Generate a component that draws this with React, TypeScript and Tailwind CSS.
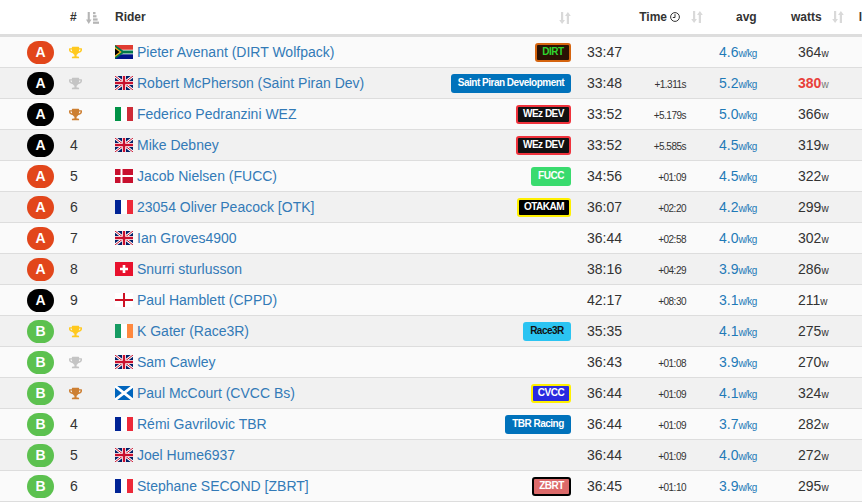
import React from 'react'
import { FaTrophy } from 'react-icons/fa'

type Flag = 'za' | 'gb' | 'it' | 'dk' | 'fr' | 'ch' | 'en' | 'ie' | 'sc'

interface Team {
    name: string
    cls: string
}

interface Rider {
    cat: 'A' | 'B'
    black?: boolean
    pos: number
    flag: Flag
    name: string
    team?: Team
    time: string
    gap?: string
    avg: string
    watts: number
    hot?: boolean
}

const badge = 'block h-[19px] rounded-[3px] text-[10px] tracking-[-0.5px] font-bold text-center whitespace-nowrap'

const TEAMS: Record<string, Team> = {
    dirt: { name: 'DIRT', cls: 'w-[36px] bg-[#2a1204] text-[#2fd62f] border-2 border-[#d5640f] leading-[13px]' },
    spd: { name: 'Saint Piran Development', cls: 'w-[120px] bg-[#0072bb] text-white leading-[17px]' },
    wez: { name: 'WEz DEV', cls: 'w-[55px] bg-[#111111] text-white border-2 border-[#f0323c] leading-[13px]' },
    fucc: { name: 'FUCC', cls: 'w-[40px] bg-[#39db6e] text-white leading-[17px]' },
    otk: { name: 'OTAKAM', cls: 'w-[54px] bg-black text-white border-2 border-[#fff000] leading-[13px]' },
    race3r: { name: 'Race3R', cls: 'w-[48px] bg-[#2bc4f2] text-[#111111] leading-[17px]' },
    cvcc: { name: 'CVCC', cls: 'w-[40px] bg-[#2a2ae0] text-white border-2 border-[#fff000] leading-[13px]' },
    tbr: { name: 'TBR Racing', cls: 'w-[66px] bg-[#0072bb] text-white leading-[17px]' },
    zbrt: { name: 'ZBRT', cls: 'w-[39px] bg-[#dc6a6a] text-white border-2 border-black leading-[13px]' }
}

const RIDERS: Rider[] = [
    { cat: 'A', pos: 1, flag: 'za', name: 'Pieter Avenant (DIRT Wolfpack)', team: TEAMS.dirt, time: '33:47', avg: '4.6', watts: 364 },
    { cat: 'A', black: true, pos: 2, flag: 'gb', name: 'Robert McPherson (Saint Piran Dev)', team: TEAMS.spd, time: '33:48', gap: '+1.311s', avg: '5.2', watts: 380, hot: true },
    { cat: 'A', black: true, pos: 3, flag: 'it', name: 'Federico Pedranzini WEZ', team: TEAMS.wez, time: '33:52', gap: '+5.179s', avg: '5.0', watts: 366 },
    { cat: 'A', black: true, pos: 4, flag: 'gb', name: 'Mike Debney', team: TEAMS.wez, time: '33:52', gap: '+5.585s', avg: '4.5', watts: 319 },
    { cat: 'A', pos: 5, flag: 'dk', name: 'Jacob Nielsen (FUCC)', team: TEAMS.fucc, time: '34:56', gap: '+01:09', avg: '4.5', watts: 322 },
    { cat: 'A', pos: 6, flag: 'fr', name: '23054 Oliver Peacock [OTK]', team: TEAMS.otk, time: '36:07', gap: '+02:20', avg: '4.2', watts: 299 },
    { cat: 'A', pos: 7, flag: 'gb', name: 'Ian Groves4900', time: '36:44', gap: '+02:58', avg: '4.0', watts: 302 },
    { cat: 'A', pos: 8, flag: 'ch', name: 'Snurri sturlusson', time: '38:16', gap: '+04:29', avg: '3.9', watts: 286 },
    { cat: 'A', black: true, pos: 9, flag: 'en', name: 'Paul Hamblett (CPPD)', time: '42:17', gap: '+08:30', avg: '3.1', watts: 211 },
    { cat: 'B', pos: 1, flag: 'ie', name: 'K Gater (Race3R)', team: TEAMS.race3r, time: '35:35', avg: '4.1', watts: 275 },
    { cat: 'B', pos: 2, flag: 'gb', name: 'Sam Cawley', time: '36:43', gap: '+01:08', avg: '3.9', watts: 270 },
    { cat: 'B', pos: 3, flag: 'sc', name: 'Paul McCourt (CVCC Bs)', team: TEAMS.cvcc, time: '36:44', gap: '+01:09', avg: '4.1', watts: 324 },
    { cat: 'B', pos: 4, flag: 'fr', name: 'Rémi Gavrilovic TBR', team: TEAMS.tbr, time: '36:44', gap: '+01:09', avg: '3.7', watts: 282 },
    { cat: 'B', pos: 5, flag: 'gb', name: 'Joel Hume6937', time: '36:44', gap: '+01:09', avg: '4.0', watts: 272 },
    { cat: 'B', pos: 6, flag: 'fr', name: 'Stephane SECOND [ZBRT]', team: TEAMS.zbrt, time: '36:45', gap: '+01:10', avg: '3.9', watts: 295 }
]

const FlagIcon: React.FC<{ code: Flag }> = ({ code }) => {
    const shapes: Record<Flag, React.ReactNode> = {
        za: (
            <>
                <rect width="18" height="14" fill="#fff" />
                <rect width="18" height="4.7" fill="#e03c31" />
                <rect y="9.3" width="18" height="4.7" fill="#001489" />
                <path d="M0 0 L8 5.6 H18 V8.4 H8 L0 14 Z" fill="#007749" />
                <path d="M0 2 L6.6 7 L0 12 Z" fill="#ffb81c" />
                <path d="M0 3.6 L4.6 7 L0 10.4 Z" fill="#000" />
            </>
        ),
        gb: (
            <>
                <rect width="18" height="14" fill="#012169" />
                <path d="M0 0 L18 14 M18 0 L0 14" stroke="#fff" strokeWidth="2.8" />
                <path d="M0 0 L18 14 M18 0 L0 14" stroke="#c8102e" strokeWidth="1" />
                <path d="M9 0 V14 M0 7 H18" stroke="#fff" strokeWidth="4" />
                <path d="M9 0 V14 M0 7 H18" stroke="#c8102e" strokeWidth="2.4" />
            </>
        ),
        it: (
            <>
                <rect width="6" height="14" fill="#009246" />
                <rect x="6" width="6" height="14" fill="#fff" />
                <rect x="12" width="6" height="14" fill="#ce2b37" />
            </>
        ),
        dk: (
            <>
                <rect width="18" height="14" fill="#c8102e" />
                <path d="M6.5 0 V14 M0 7 H18" stroke="#fff" strokeWidth="2" />
            </>
        ),
        fr: (
            <>
                <rect width="6" height="14" fill="#002395" />
                <rect x="6" width="6" height="14" fill="#fff" />
                <rect x="12" width="6" height="14" fill="#ed2939" />
            </>
        ),
        ch: (
            <>
                <rect width="18" height="14" fill="#e8112d" />
                <path d="M9 3 V11 M5 7 H13" stroke="#fff" strokeWidth="2.6" />
            </>
        ),
        en: (
            <>
                <rect width="18" height="14" fill="#fff" />
                <path d="M9 0 V14 M0 7 H18" stroke="#ce1124" strokeWidth="2" />
            </>
        ),
        ie: (
            <>
                <rect width="6" height="14" fill="#169b62" />
                <rect x="6" width="6" height="14" fill="#fff" />
                <rect x="12" width="6" height="14" fill="#ff883e" />
            </>
        ),
        sc: (
            <>
                <rect width="18" height="14" fill="#0065bd" />
                <path d="M0 0 L18 14 M18 0 L0 14" stroke="#fff" strokeWidth="2.8" />
            </>
        )
    }
    return (
        <svg width="18" height="14" viewBox="0 0 18 14" className="inline-block align-[-2px] mr-[4px]">
            {shapes[code]}
        </svg>
    )
}

const SortIcon: React.FC = () => (
    <svg width="12" height="12" viewBox="0 0 12 12" className="inline-block" fill="#d9d9d9">
        <path d="M2 0 H4.2 V8 H6 L3.1 12 L0.2 8 H2 Z" />
        <path d="M7.8 12 H10 V4 H11.8 L8.9 0 L6 4 H7.8 Z" />
    </svg>
)

const SortAmountIcon: React.FC = () => (
    <svg width="13" height="12" viewBox="0 0 13 12" className="inline-block" fill="#b5b5b5">
        <path d="M1.7 0 H3.8 V7.5 H5.5 L2.75 12 L0 7.5 H1.7 Z" />
        <rect x="7" y="0" width="2.5" height="2.2" />
        <rect x="7" y="3.2" width="3.5" height="2.2" />
        <rect x="7" y="6.4" width="4.6" height="2.2" />
        <rect x="7" y="9.6" width="6" height="2.2" />
    </svg>
)

const ClockIcon: React.FC = () => (
    <svg width="10" height="10" viewBox="0 0 10 10" className="inline-block" fill="none" stroke="#333" strokeWidth="1">
        <circle cx="5" cy="5" r="4.4" />
        <path d="M5 2.2 V5.5 H2.8" />
    </svg>
)

const trophyColors = ['text-[#ffc91f]', 'text-[#c4c4c4]', 'text-[#cd7f32]']

const RiderRow: React.FC<{ rider: Rider; index: number }> = ({ rider, index }) => {
    const catColor = rider.black ? 'bg-black' : rider.cat === 'A' ? 'bg-[#e2461b]' : 'bg-[#5cc14f]'

    return (
        <tr className={`h-[31px] [&>td]:border-b [&>td]:border-[#dddddd] ${index % 2 === 0 ? 'bg-[#fafafa]' : 'bg-[#f1f1f1]'}`}>
            <td className="p-0 pl-[27px]">
                <div className={`w-[27px] h-[23px] rounded-[12px] text-white text-[14px] leading-[23px] font-bold text-center ${catColor}`}>
                    {rider.cat}
                </div>
            </td>
            <td className="p-0 pl-[10px] text-[#333333]">
                {rider.pos <= 3 ? <FaTrophy size={13} className={`ml-[-1px] ${trophyColors[rider.pos - 1]}`} /> : rider.pos}
            </td>
            <td className="p-0 text-[#337ab7] whitespace-nowrap">
                <FlagIcon code={rider.flag} />
                {rider.name}
            </td>
            <td className="p-0">
                {rider.team && (
                    <div className="flex justify-end">
                        <span className={`${badge} ${rider.team.cls}`}>{rider.team.name}</span>
                    </div>
                )}
            </td>
            <td className="p-0 pl-[16px] text-[#333333]">{rider.time}</td>
            <td className="p-0 pr-[18px] text-right text-[10px] tracking-[-0.5px] text-[#333333] leading-none align-middle">
                <span className="relative top-[2px]">{rider.gap}</span>
            </td>
            <td className="p-0 pl-[15px] text-[#1f7ab8] whitespace-nowrap">
                {rider.avg}
                <span className="text-[10px] tracking-[-0.6px]">w/kg</span>
            </td>
            <td className="p-0 pl-[37px] whitespace-nowrap text-[#333333]">
                <span className={rider.hot ? 'font-bold text-[#e8403a]' : ''}>{rider.watts}</span>
                <span className={`text-[10px] tracking-[-0.6px] ${rider.hot ? 'text-[#777777]' : ''}`}>w</span>
            </td>
        </tr>
    )
}

export default function App() {
    return (
        <div className="w-[862px] h-[503px] overflow-hidden bg-white font-['Liberation_Sans',Arial,sans-serif] text-[14px]">
            <table className="table-fixed border-separate border-spacing-0 w-[862px]">
                <colgroup>
                    <col className="w-[60px]" />
                    <col className="w-[55px]" />
                    <col className="w-[290px]" />
                    <col className="w-[166px]" />
                    <col className="w-[60px]" />
                    <col className="w-[73px]" />
                    <col className="w-[57px]" />
                    <col className="w-[101px]" />
                </colgroup>
                <thead>
                    <tr className="h-[37px] [&>th]:border-b-[3px] [&>th]:border-[#dddddd] text-[12px] font-bold text-[#333333]">
                        <th className="p-0" />
                        <th className="p-0 pl-[10px] text-left">
                            # <span className="ml-[6px]"><SortAmountIcon /></span>
                        </th>
                        <th className="p-0 text-left">Rider</th>
                        <th className="p-0 text-right"><SortIcon /></th>
                        <th className="p-0" colSpan={2}>
                            <div className="flex items-center justify-end gap-[3px] pr-[1px]">
                                Time <ClockIcon />
                                <span className="ml-[8px] flex"><SortIcon /></span>
                            </div>
                        </th>
                        <th className="p-0 text-left pl-[32px]">avg</th>
                        <th className="p-0 pl-[30px] whitespace-nowrap">
                            <div className="flex items-center">
                                watts
                                <span className="ml-[10px] flex"><SortIcon /></span>
                                <span className="ml-[15px]">l</span>
                            </div>
                        </th>
                    </tr>
                </thead>
                <tbody>
                    {RIDERS.map((r, i) => (
                        <RiderRow key={`${r.cat}-${r.pos}`} rider={r} index={i} />
                    ))}
                </tbody>
            </table>
        </div>
    )
}
